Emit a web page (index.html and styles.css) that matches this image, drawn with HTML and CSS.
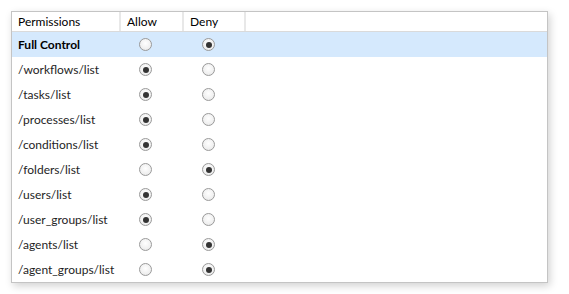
FILE: index.html
```html
<!DOCTYPE html>
<html lang="en">
<head>
    <meta charset="UTF-8">
    <title>Permissions</title>
    <link rel="stylesheet" href="styles.css">
</head>
<body>
    <div class="grid">
        <div class="row head">
            <div class="cell">Permissions</div>
            <div class="cell">Allow</div>
            <div class="cell">Deny</div>
            <div class="cell"></div>
        </div>
        <div class="row selected">
            <div class="cell name bold">Full Control</div>
            <div class="cell"><span class="radio"></span></div>
            <div class="cell"><span class="radio on"></span></div>
            <div class="cell"></div>
        </div>
        <div class="row">
            <div class="cell name">/workflows/list</div>
            <div class="cell"><span class="radio on"></span></div>
            <div class="cell"><span class="radio"></span></div>
            <div class="cell"></div>
        </div>
        <div class="row">
            <div class="cell name">/tasks/list</div>
            <div class="cell"><span class="radio on"></span></div>
            <div class="cell"><span class="radio"></span></div>
            <div class="cell"></div>
        </div>
        <div class="row">
            <div class="cell name">/processes/list</div>
            <div class="cell"><span class="radio on"></span></div>
            <div class="cell"><span class="radio"></span></div>
            <div class="cell"></div>
        </div>
        <div class="row">
            <div class="cell name">/conditions/list</div>
            <div class="cell"><span class="radio on"></span></div>
            <div class="cell"><span class="radio"></span></div>
            <div class="cell"></div>
        </div>
        <div class="row">
            <div class="cell name">/folders/list</div>
            <div class="cell"><span class="radio"></span></div>
            <div class="cell"><span class="radio on"></span></div>
            <div class="cell"></div>
        </div>
        <div class="row">
            <div class="cell name">/users/list</div>
            <div class="cell"><span class="radio on"></span></div>
            <div class="cell"><span class="radio"></span></div>
            <div class="cell"></div>
        </div>
        <div class="row">
            <div class="cell name">/user_groups/list</div>
            <div class="cell"><span class="radio on"></span></div>
            <div class="cell"><span class="radio"></span></div>
            <div class="cell"></div>
        </div>
        <div class="row">
            <div class="cell name">/agents/list</div>
            <div class="cell"><span class="radio"></span></div>
            <div class="cell"><span class="radio on"></span></div>
            <div class="cell"></div>
        </div>
        <div class="row">
            <div class="cell name">/agent_groups/list</div>
            <div class="cell"><span class="radio"></span></div>
            <div class="cell"><span class="radio on"></span></div>
            <div class="cell"></div>
        </div>
    </div>
</body>
</html>
```

FILE: styles.css
```css
body {
    margin: 0;
    padding: 11px;
    background-color: white;
    font-family: Lato, "Liberation Sans", sans-serif;
    font-size: 12px;
    color: #1e1e1e;
}
.grid {
    width: 535px;
    border: 1px solid #c4c4c4;
    background-color: white;
    box-shadow: 2px 3px 8px rgba(0,0,0,0.18);
}
.row {
    display: grid;
    grid-template-columns: 109px 63px 62px 1fr;
    height: 25px;
}
.row .cell {
    display: flex;
    align-items: center;
    padding-left: 18px;
}
.row .name {
    padding-left: 6px;
}
.head {
    height: 19px;
    border-bottom: 1px solid #dadada;
    color: #000;
}
.head .cell {
    padding-left: 6px;
    border-right: 2px solid #e8e8e8;
}
.head .cell:last-child {
    border-right: none;
}
.selected {
    background-color: #d5e9fd;
}
.bold {
    font-weight: bold;
    color: #000;
}
.radio {
    width: 11px;
    height: 11px;
    border: 1px solid #9a9a9a;
    border-radius: 50%;
    background: radial-gradient(circle at 50% 40%, #ffffff 0%, #f0f0f0 60%, #e2e2e2 100%);
    position: relative;
}
.radio.on::after {
    content: "";
    position: absolute;
    left: 2.5px;
    top: 2.5px;
    width: 6px;
    height: 6px;
    border-radius: 50%;
    background-color: #333;
}
```
